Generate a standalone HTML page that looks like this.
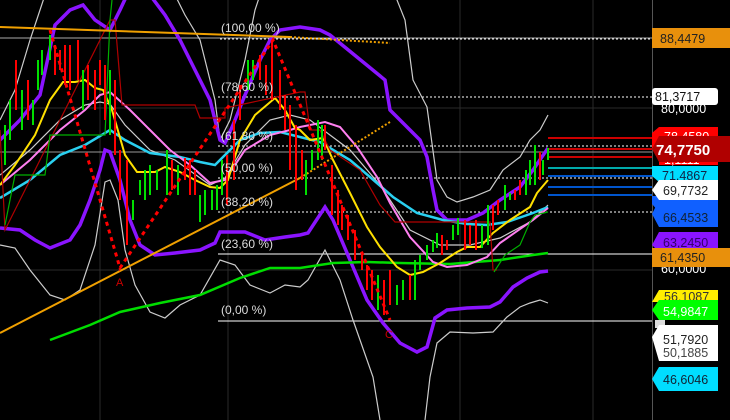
<!DOCTYPE html>
<html><head><meta charset="utf-8"><style>
html,body{margin:0;padding:0;background:#000;width:730px;height:420px;overflow:hidden}
svg{display:block}
text{font-family:"Liberation Sans",sans-serif}
#c rect{width:2px}
</style></head><body>
<svg width="730" height="420" viewBox="0 0 730 420" xmlns="http://www.w3.org/2000/svg">
<rect width="730" height="420" fill="#000"/>
<g stroke="#2a2a2a" stroke-width="1">
<line x1="100" y1="0" x2="100" y2="420"/><line x1="228" y1="0" x2="228" y2="420"/><line x1="460" y1="0" x2="460" y2="420"/><line x1="593" y1="0" x2="593" y2="420"/>
<line x1="0" y1="108" x2="652" y2="108"/><line x1="0" y1="270" x2="652" y2="270"/>
</g>
<line x1="652.5" y1="0" x2="652.5" y2="420" stroke="#555"/>
<line x1="0" y1="38" x2="652" y2="38" stroke="#aaa"/>
<line x1="0" y1="152" x2="652" y2="152" stroke="#999"/>
<g stroke="#fff" stroke-dasharray="2,2" stroke-width="1">
<line x1="220" y1="39" x2="652" y2="39"/><line x1="218" y1="97" x2="652" y2="97"/><line x1="218" y1="146" x2="652" y2="146"/><line x1="218" y1="178" x2="652" y2="178"/><line x1="218" y1="212" x2="652" y2="212"/>
</g>
<line x1="218" y1="254" x2="652" y2="254" stroke="#fff"/>
<line x1="218" y1="321" x2="652" y2="321" stroke="#fff"/>
<g stroke-width="2">
<line x1="548" y1="138" x2="652" y2="138" stroke="#c00"/><line x1="548" y1="149" x2="652" y2="149" stroke="#c00"/><line x1="548" y1="157" x2="652" y2="157" stroke="#c00"/>
<line x1="548" y1="168" x2="652" y2="168" stroke="#0aa"/><line x1="548" y1="176" x2="652" y2="176" stroke="#05c"/><line x1="548" y1="187" x2="652" y2="187" stroke="#05c"/><line x1="548" y1="195" x2="652" y2="195" stroke="#05c"/>
</g>
<g fill="none" stroke="#ccc" stroke-width="1.2">
<polyline points="0,120 15,90 30,40 40,10 45,-5"/>
<polyline points="175,-5 185,15 200,40 215,100 220,140 230,120 245,60 255,10 260,-5"/>
<polyline points="395,-5 405,20 413,80 427,107 437,180 447,197 457,202 473,197 490,190 503,170 520,157 530,140 540,130 548,115"/>
<polyline points="0,245 15,248 30,270 50,295 65,300 80,290 95,245 105,182 110,180 118,200 125,250 135,285 150,312 165,318 180,305 200,295 220,260 235,265 250,285 270,293 285,285 300,287 308,280 325,250 340,280 353,320 373,377 380,420"/>
<polyline points="425,420 430,377 437,343 450,332 473,333 493,332 507,317 520,307 530,303 540,300 548,303"/>
<polyline points="0,175 30,150 60,120 85,105 100,102 110,104 125,125 150,150 175,160 210,185 225,178 245,145 270,120 290,115 310,120 330,135 350,150 380,185 410,230 440,245 470,245 500,238 530,222 548,205"/>
</g>
<g fill="none" stroke="#8a14ff" stroke-width="3.5">
<polyline points="0,140 20,120 40,95 55,25 70,10 83,5 95,20 110,30 120,10 127,-5"/>
<polyline points="150,-5 165,15 180,40 195,70 210,100 220,140 225,143 233,125 245,95 260,60 270,40 280,30 300,27 320,30 330,35 385,80 390,110 410,130 420,140 427,157 433,190 437,210 447,220 467,220 483,213 500,200 520,187 533,170 548,148"/>
<polyline points="0,228 20,230 35,240 50,248 70,240 80,225 90,200 100,170 105,150 110,152 120,180 130,220 140,245 155,255 175,253 200,250 215,243 220,232 245,232 265,240 285,237 300,235 308,233 325,207 333,220 350,260 367,300 383,323 400,343 417,352 427,347 435,318 447,310 467,308 490,307 500,302 513,287 527,278 540,272 548,271"/>
</g>
<polyline fill="none" stroke="#00dd00" stroke-width="2.5" points="50,340 90,325 120,312 160,303 200,295 240,278 270,268 300,268 333,263 367,262 400,263 450,264 500,260 533,255 548,253"/>
<polyline fill="none" stroke="#2ad0f0" stroke-width="2.5" points="0,198 30,180 60,155 85,145 110,130 125,140 150,153 180,157 200,162 215,165 225,155 240,140 260,133 280,132 300,137 320,142 350,160 370,177 393,197 417,213 443,220 467,224 487,225 507,222 533,213 548,207"/>
<polyline fill="none" stroke="#ff7ff0" stroke-width="2" points="0,185 30,160 60,130 85,110 100,95 110,92 130,110 150,130 170,150 190,165 210,183 225,180 245,150 270,135 290,130 300,127 325,122 340,127 357,147 377,177 390,203 410,237 433,262 447,267 467,265 487,257 500,243 533,220 548,208"/>
<polyline fill="none" stroke="#ffe000" stroke-width="2" points="0,185 15,165 35,135 50,100 63,82 75,82 85,80 95,88 103,90 112,110 125,155 137,172 155,172 165,167 180,172 195,180 210,187 220,188 228,180 240,140 255,115 275,98 285,110 295,128 300,130 310,140 323,138 333,160 350,193 367,227 380,247 397,267 410,275 423,272 440,263 457,252 467,247 480,247 493,233 510,220 530,207 537,193 548,180"/>
<polyline fill="none" stroke="#b00000" stroke-width="1.2" points="0,130 5,230 110,20 115,20 122,105 195,105 200,118 225,118 225,108 300,92 305,92 310,130 320,130 330,150 360,170 380,205 395,222 490,222 493,270 497,270"/>
<polyline fill="none" stroke="#00b000" stroke-width="1.2" points="5,225 15,175 45,175 50,135 105,135 110,20 112,0"/>
<polyline fill="none" stroke="#00b000" stroke-width="1.2" points="494,272 505,255 520,245 530,222 535,215 548,212"/>
<line x1="0" y1="27" x2="290" y2="37" stroke="#f0a000" stroke-width="2"/>
<line x1="290" y1="37" x2="390" y2="43" stroke="#f0a000" stroke-width="2" stroke-dasharray="2,2"/>
<line x1="0" y1="333" x2="300" y2="178" stroke="#f0a000" stroke-width="2"/>
<line x1="300" y1="178" x2="390" y2="122" stroke="#f0a000" stroke-width="2" stroke-dasharray="2,2"/>
<g id="c">
<g fill="#f00">
<rect x="15" y="60" width="2" height="50"/><rect x="27" y="80" width="2" height="40"/><rect x="54" y="45" width="2" height="30"/><rect x="59" y="50" width="2" height="20"/><rect x="64" y="45" width="2" height="40"/><rect x="69" y="45" width="2" height="45"/><rect x="77" y="40" width="2" height="40"/><rect x="87" y="65" width="2" height="35"/><rect x="94" y="70" width="2" height="40"/><rect x="99" y="60" width="2" height="25"/><rect x="104" y="65" width="2" height="55"/><rect x="114" y="80" width="2" height="75"/><rect x="119" y="150" width="2" height="50"/><rect x="126" y="160" width="2" height="85"/><rect x="171" y="160" width="2" height="30"/><rect x="184" y="158" width="2" height="22"/><rect x="189" y="160" width="2" height="35"/><rect x="194" y="170" width="2" height="25"/><rect x="226" y="155" width="2" height="50"/><rect x="233" y="120" width="2" height="60"/><rect x="239" y="85" width="2" height="35"/><rect x="259" y="55" width="2" height="25"/><rect x="265" y="65" width="2" height="30"/><rect x="271" y="42" width="2" height="58"/><rect x="279" y="70" width="2" height="40"/><rect x="284" y="95" width="2" height="35"/><rect x="289" y="105" width="2" height="65"/><rect x="295" y="125" width="2" height="65"/><rect x="301" y="150" width="2" height="30"/><rect x="324" y="125" width="2" height="25"/><rect x="331" y="165" width="2" height="50"/><rect x="337" y="190" width="2" height="35"/><rect x="341" y="205" width="2" height="25"/><rect x="347" y="215" width="3" height="25"/><rect x="354" y="230" width="3" height="30"/><rect x="361" y="255" width="3" height="15"/><rect x="366" y="265" width="3" height="25"/><rect x="371" y="270" width="3" height="30"/><rect x="383" y="280" width="2" height="35"/><rect x="389" y="270" width="2" height="35"/><rect x="409" y="275" width="2" height="25"/><rect x="441" y="235" width="2" height="20"/><rect x="446" y="240" width="2" height="10"/><rect x="464" y="220" width="2" height="30"/><rect x="469" y="225" width="2" height="20"/><rect x="475" y="220" width="2" height="30"/><rect x="492" y="205" width="2" height="25"/><rect x="497" y="200" width="2" height="15"/><rect x="514" y="190" width="2" height="10"/><rect x="519" y="180" width="2" height="15"/><rect x="539" y="152" width="2" height="28"/>
</g>
<g fill="#00e000">
<rect x="4" y="125" width="3" height="40"/><rect x="9" y="100" width="3" height="40"/><rect x="21" y="90" width="2" height="40"/><rect x="32" y="100" width="2" height="25"/><rect x="37" y="60" width="3" height="30"/><rect x="41" y="50" width="3" height="25"/><rect x="49" y="35" width="3" height="25"/><rect x="82" y="70" width="2" height="40"/><rect x="109" y="70" width="3" height="65"/><rect x="132" y="200" width="3" height="20"/><rect x="139" y="180" width="2" height="15"/><rect x="144" y="170" width="3" height="30"/><rect x="149" y="165" width="3" height="30"/><rect x="156" y="170" width="2" height="20"/><rect x="166" y="150" width="3" height="45"/><rect x="177" y="165" width="2" height="30"/><rect x="199" y="195" width="3" height="27"/><rect x="204" y="190" width="3" height="25"/><rect x="211" y="190" width="2" height="20"/><rect x="216" y="185" width="3" height="25"/><rect x="221" y="160" width="3" height="35"/><rect x="247" y="60" width="3" height="30"/><rect x="252" y="60" width="3" height="20"/><rect x="305" y="160" width="3" height="35"/><rect x="311" y="150" width="3" height="20"/><rect x="317" y="120" width="2" height="40"/><rect x="321" y="125" width="3" height="35"/><rect x="377" y="275" width="3" height="35"/><rect x="396" y="285" width="3" height="20"/><rect x="402" y="280" width="3" height="20"/><rect x="414" y="260" width="3" height="40"/><rect x="419" y="255" width="3" height="15"/><rect x="426" y="245" width="3" height="15"/><rect x="432" y="240" width="3" height="12"/><rect x="436" y="233" width="3" height="15"/><rect x="452" y="225" width="3" height="15"/><rect x="457" y="218" width="3" height="17"/><rect x="481" y="225" width="3" height="23"/><rect x="487" y="205" width="3" height="40"/><rect x="504" y="185" width="3" height="25"/><rect x="509" y="193" width="3" height="7"/><rect x="525" y="170" width="3" height="25"/><rect x="529" y="160" width="3" height="25"/><rect x="534" y="145" width="3" height="40"/><rect x="542" y="160" width="3" height="15"/><rect x="547" y="148" width="3" height="12"/>
</g>
</g>
<polyline fill="none" stroke="#f00" stroke-width="3" stroke-dasharray="4,4" points="50,30 120,268 273,40 390,320"/>
<text x="116" y="286" fill="#c00" font-size="11">A</text>
<text x="385" y="338" fill="#c00" font-size="11">C</text>
<g fill="#ddd" font-size="12">
<text x="221" y="32">(100,00 %)</text><text x="221" y="91">(78,60 %)</text><text x="221" y="140">(61,80 %)</text><text x="221" y="172">(50,00 %)</text><text x="221" y="206">(38,20 %)</text><text x="221" y="248">(23,60 %)</text><text x="221" y="314">(0,00 %)</text>
</g>
<g font-size="12.5">
<rect x="652" y="28" width="78" height="20" fill="#e8900c"/><text x="660" y="43" fill="#222">88,4479</text>
<text x="661" y="113" fill="#fff">80,0000</text>
<rect x="652" y="88" width="66" height="17" rx="3" fill="#fff"/><text x="655" y="101" fill="#111">81,3717</text>
<polygon points="659,127 718,127 718,148 652,148 652,133" fill="#f00"/><text x="664" y="141" fill="#fff">78,4580</text>
<polygon points="652,166 718,166 718,182 659,182 652,176" fill="#00ddff"/><text x="662" y="180" fill="#124">71,4867</text>
<polygon points="652,196 718,196 718,212 659,212 652,204" fill="#1060ff"/>
<polygon points="659,153 718,153 718,165 659,165" fill="#f00"/><text x="664" y="164" fill="#fff">1,1111</text>
<polygon points="659,136 730,136 730,162 659,162 652,149" fill="#b00000"/><text x="656" y="155" fill="#fff" font-size="15" font-weight="bold">74,7750</text>
<polygon points="659,180 718,180 718,200 659,200 652,190" fill="#fff"/><text x="663" y="195" fill="#222">69,7732</text>
<polygon points="659,200 718,200 718,227 659,227 652,214" fill="#1060ff"/><text x="663" y="222" fill="#123">66,4533</text>
<polygon points="659,232 718,232 718,252 659,252 652,245" fill="#8a14ff"/><text x="663" y="247" fill="#330066">63,2450</text>
<text x="661" y="273" fill="#fff">60,0000</text>
<rect x="652" y="248" width="78" height="19" fill="#e8900c"/><text x="660" y="262" fill="#222">61,4350</text>
<polygon points="659,290 718,290 718,302 652,302" fill="#ffee00"/><text x="664" y="301" fill="#333">56,1087</text>
<polygon points="659,300 718,300 718,320 659,320 652,310" fill="#00ff00"/><text x="663" y="316" fill="#fff">54,9847</text>
<rect x="655" y="320" width="10" height="8" fill="#ddd"/>
<polygon points="659,325 718,325 718,361 659,361 652,337" fill="#fff"/><text x="663" y="344" fill="#222">51,7920</text><text x="663" y="357" fill="#444">50,1885</text>
<polygon points="659,367 718,367 718,391 659,391 652,379" fill="#00ddff"/><text x="663" y="384" fill="#123">46,6046</text>
</g>
</svg>
</body></html>
